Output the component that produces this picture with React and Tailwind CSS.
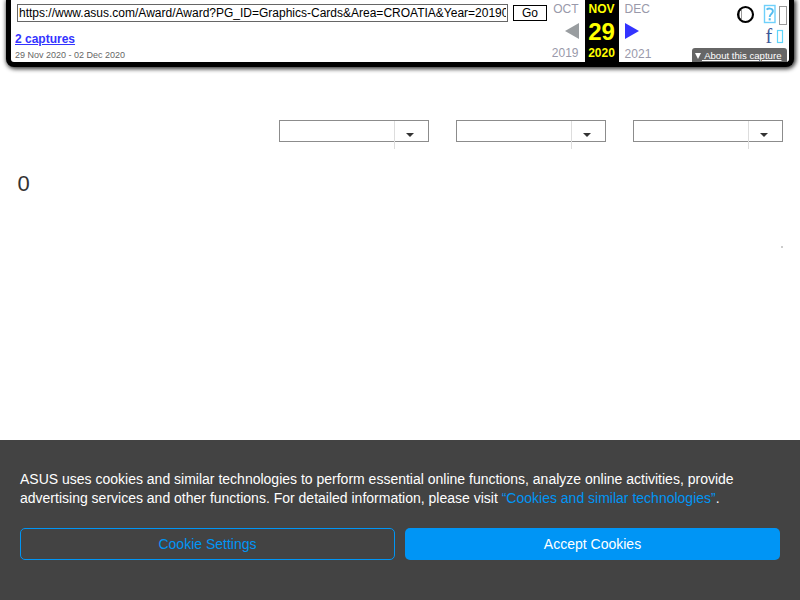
const MONTHS = {
  prev: { month: 'OCT', year: '2019' },
  next: { month: 'DEC', year: '2021' },
};

function ToolbarIcons() {
  return (
    <svg className="block h-[48px] w-[58px]" viewBox="0 0 58 48" fill="none">
      <rect x="10.5" y="10.5" width="2" height="8" stroke="#999" />
      <circle cx="16.5" cy="14.5" r="7.5" stroke="#000" strokeWidth="2.1" />
      <rect x="35.5" y="5.5" width="10.5" height="17" stroke="#6fd0fb" strokeWidth="1.4" />
      <path d="M37.6 9.6C39 8.2 43.9 7.8 43.9 11.3C43.9 13.8 40.7 13.6 40.7 17" stroke="#55bdf0" strokeWidth="1.9" />
      <rect x="39.7" y="18.2" width="2" height="2.2" fill="#55bdf0" />
      <rect x="50.5" y="6.5" width="7" height="18" stroke="#999" />
      <rect x="48.5" y="30.5" width="5" height="12" stroke="#60d5fa" strokeWidth="1.2" />
      <text x="36.5" y="43" fill="#3b5998" fontSize="20" fontFamily="Liberation Serif, serif">f</text>
    </svg>
  );
}

function ArchiveToolbar() {
  return (
    <header className="mx-[6px] flex h-[67px] rounded-b-[8px] border-x-[5px] border-b-[5px] border-black bg-white shadow-[1px_1px_4px_1px_#333]">
      <div className="w-[541px] shrink-0 pl-1 pt-1">
        <div className="flex h-[18px] items-center gap-[5px] pl-[2px]">
          <input
            className="h-[18px] w-[491px] border border-[#666] bg-white px-px text-[12px] leading-[16px] text-black outline-none"
            defaultValue="https://www.asus.com/Award/Award?PG_ID=Graphics-Cards&Area=CROATIA&Year=201909"
          />
          <button className="h-[16px] w-[34px] border border-black text-[12px] leading-[14px] text-black">Go</button>
        </div>
        <a className="mt-[10px] block text-[12px] font-bold leading-[14px] text-[#33f] underline">2 captures</a>
        <div className="mt-[3px] text-[9px] leading-[12px] text-[#666]">29 Nov 2020 - 02 Dec 2020</div>
      </div>
      <div className="flex h-[62px] w-[27px] flex-col items-end text-[12px] leading-[14px] text-[#99a]">
        <span className="mr-[0.5px] mt-[2px]">{MONTHS.prev.month}</span>
        <svg className="mt-[7px] h-[16px] w-[14px]" viewBox="0 0 14 16"><path d="M14 0v16L0 8z" fill="#999da0" /></svg>
        <span className="mr-[0.5px] mt-[7px]">{MONTHS.prev.year}</span>
      </div>
      <div className="ml-[6px] flex h-[62px] w-[34px] shrink-0 flex-col items-center bg-black pr-px text-[12px] font-bold leading-[14px] text-[#ff0]">
        <span className="mt-[2px]">NOV</span>
        <span className="mt-[2px] text-[24px] leading-[28px]">29</span>
        <span>2020</span>
      </div>
      <div className="ml-[6px] flex h-[62px] w-[67px] flex-col items-start text-[12px] leading-[14px] text-[#99a]">
        <span className="-ml-[0.4px] mt-[2px]">{MONTHS.next.month}</span>
        <svg className="mt-[7px] h-[16px] w-[14px]" viewBox="0 0 14 16"><path d="M0 0v16L14 8z" fill="#33f" /></svg>
        <span className="-ml-[0.4px] mt-[8px]">{MONTHS.next.year}</span>
      </div>
      <div className="ml-auto mr-[2px] flex w-[95px] shrink-0 flex-col">
        <div className="flex justify-end"><ToolbarIcons /></div>
        <div className="flex h-[14px] items-center rounded-t-[3px] bg-[#666] pl-[3px] text-[9.6px] leading-[14px] text-white">
          <svg className="mt-px h-[6px] w-[6px] shrink-0" viewBox="0 0 6 6"><path d="M0 0h6L3 6z" fill="#fff" /></svg>
          <span className="ml-px whitespace-pre pt-[2px] underline"> About this capture</span>
        </div>
      </div>
    </header>
  );
}

function Dropdown() {
  return (
    <div className="flex h-[22px] w-[150px] justify-end border border-[#8c8c8c]">
      <div className="flex h-[28px] w-[34px] justify-center border-l border-[#ddd] pr-[3px] pt-[12px]">
        <svg className="h-[4px] w-[8px]" viewBox="0 0 8 4"><path d="M0 0h8L4 4z" fill="#333" /></svg>
      </div>
    </div>
  );
}

function CookieBanner() {
  return (
    <footer className="h-[160px] bg-[#434343] px-5 pt-[30px] text-[14px] leading-[19px] text-white">
      <p>
        ASUS uses cookies and similar technologies to perform essential online functions, analyze online activities, provide
        advertising services and other functions. For detailed information, please visit{' '}
        <a className="text-[#0095f5]">“Cookies and similar technologies”</a>.
      </p>
      <div className="mt-5 grid grid-cols-2 gap-[10px]">
        <button className="h-8 rounded-[5px] border border-[#0095f5] text-[#0095f5]">Cookie Settings</button>
        <button className="h-8 rounded-[5px] bg-[#0095f5] text-white">Accept Cookies</button>
      </div>
    </footer>
  );
}

export default function App() {
  return (
    <div className="flex h-[600px] w-[800px] flex-col overflow-hidden bg-white font-['Liberation_Sans',Arial,sans-serif]">
      <ArchiveToolbar />
      <main className="flex flex-1 flex-col pt-[53px]">
        <div className="flex justify-end gap-[27px] pr-[17px]">
          <Dropdown />
          <Dropdown />
          <Dropdown />
        </div>
        <div className="ml-[17.5px] mt-[29px] text-[22px] leading-[26px] text-[#333]">0</div>
        <div className="ml-[781px] mt-[49px] h-[2px] w-[2px] bg-[#ccc]" />
      </main>
      <CookieBanner />
    </div>
  );
}
